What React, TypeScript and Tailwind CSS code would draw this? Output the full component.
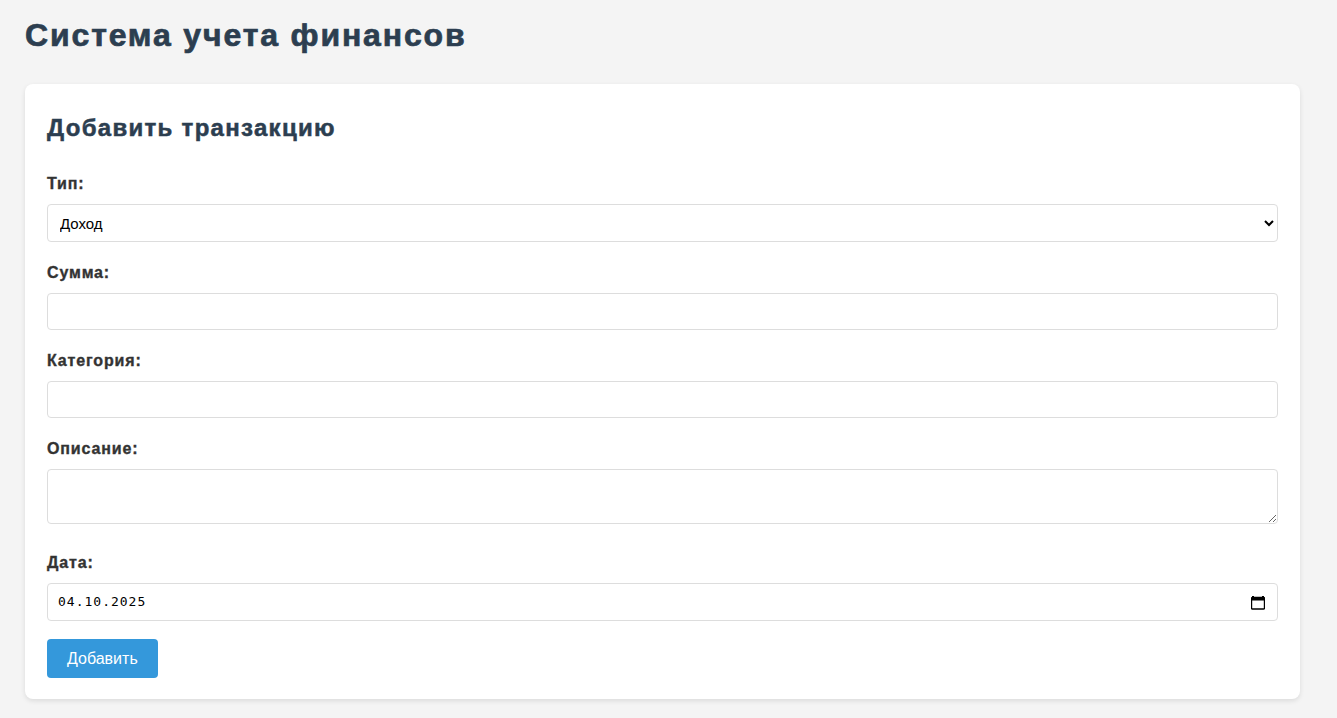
import { useState } from 'react'

function CalendarIcon() {
  return (
    <svg width="14" height="15" viewBox="0 0 14 15" className="shrink-0">
      <rect x="1" y="1" width="2" height="2" fill="#000" />
      <rect x="11" y="1" width="2" height="2" fill="#000" />
      <rect x="0.5" y="2.5" width="13" height="11.5" rx="1" fill="none" stroke="#000" strokeWidth="1.4" />
      <rect x="0.5" y="2.5" width="13" height="3" fill="#000" />
    </svg>
  )
}

// headings and labels in the reference are heavier and wider than plain bold
const labelCls =
  'block text-[16px] leading-[25px] font-bold tracking-[0.85px] [-webkit-text-stroke:0.35px_#333] text-[#333] mb-[8px]'
const fieldCls =
  'block w-full border border-[#ddd] rounded-[4px] px-[10px] text-[13.33px] text-black bg-white outline-none'

export default function App() {
  const [type, setType] = useState('income')

  return (
    <div
      className="min-h-screen bg-[#f4f4f4] pl-[25px] pr-[37px] pt-[16px] pb-[20px]"
      style={{ fontFamily: 'Arial, "Liberation Sans", sans-serif' }}
    >
      <h1 className="text-[32px] leading-[38px] font-bold tracking-[1.85px] [-webkit-text-stroke:0.7px_#2c3e50] text-[#2c3e50] mb-[30px]">
        Система учета финансов
      </h1>

      <div className="bg-white rounded-[8px] shadow-[0_2px_5px_rgba(0,0,0,0.1)] px-[22px] pt-[29px] pb-[21px]">
        <h2 className="text-[24px] leading-[30px] font-bold tracking-[1.3px] [-webkit-text-stroke:0.5px_#2c3e50] text-[#2c3e50] mb-[28px]">
          Добавить транзакцию
        </h2>

        <form onSubmit={(e) => e.preventDefault()}>
          <div className="mb-[18px]">
            <label className={labelCls}>Тип:</label>
            <select
              value={type}
              onChange={(e) => setType(e.target.value)}
              className={`${fieldCls} h-[38px] !text-[15px] !pl-[8px]`}
            >
              <option value="income">Доход</option>
              <option value="expense">Расход</option>
            </select>
          </div>

          <div className="mb-[18px]">
            <label className={labelCls}>Сумма:</label>
            <input type="number" className={`${fieldCls} h-[37px]`} />
          </div>

          <div className="mb-[18px]">
            <label className={labelCls}>Категория:</label>
            <input type="text" className={`${fieldCls} h-[37px]`} />
          </div>

          <div className="mb-[26px]">
            <label className={labelCls}>Описание:</label>
            <textarea className={`${fieldCls} h-[55px] py-[10px] resize-y`} />
          </div>

          <div className="mb-[18px]">
            <label className={labelCls}>Дата:</label>
            <div className={`${fieldCls} h-[38px] flex items-center justify-between pr-[12px]`}>
              <span
                className="text-[13px] tracking-[1px] text-black"
                style={{ fontFamily: '"DejaVu Sans Mono", monospace' }}
              >
                04.10.2025
              </span>
              <CalendarIcon />
            </div>
          </div>

          <button
            type="submit"
            className="bg-[#3498db] text-white text-[16px] leading-[19px] px-[20px] py-[10px] rounded-[4px]"
          >
            Добавить
          </button>
        </form>
      </div>
    </div>
  )
}
